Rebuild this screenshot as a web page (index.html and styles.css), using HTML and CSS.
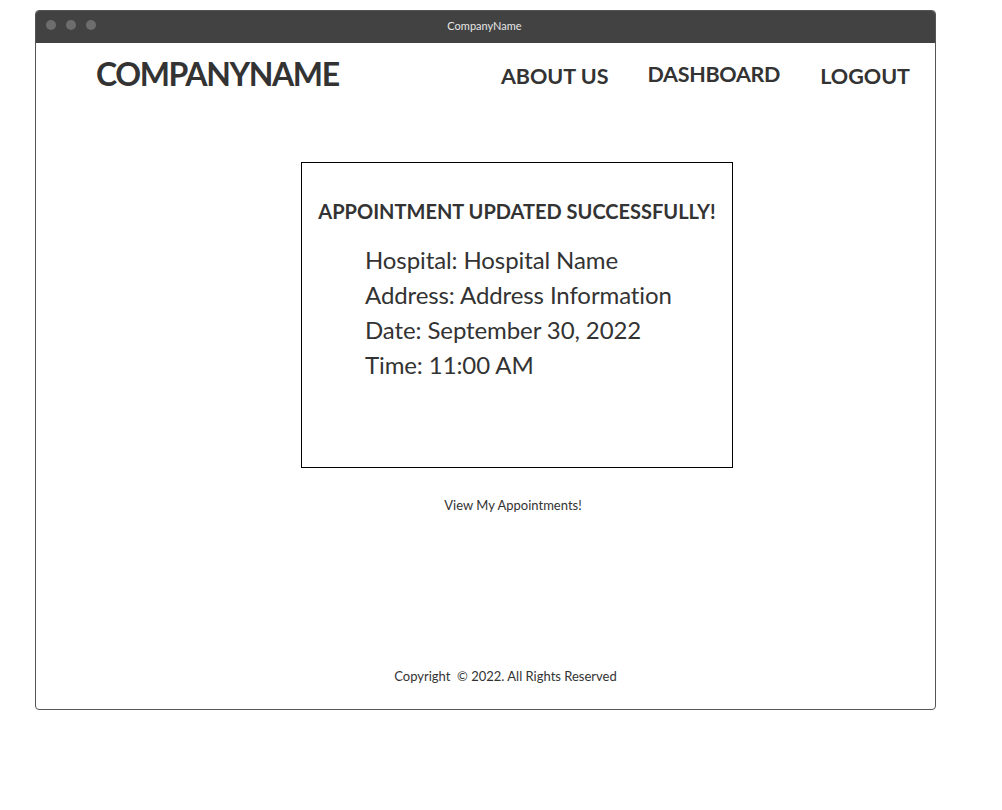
FILE: index.html
```html
<!DOCTYPE html>
<html lang="en">
<head>
  <meta charset="UTF-8">
  <meta name="viewport" content="width=device-width, initial-scale=1.0">
  <title>CompanyName</title>

  <link rel="stylesheet" href="styles.css">
</head>
<body>
  <div class="window">
    <div class="titlebar">
      <div class="dots">
        <span class="dot"></span>
        <span class="dot"></span>
        <span class="dot"></span>
      </div>
      <div class="title">CompanyName</div>
    </div>

    <div class="page">
      <header class="header">
        <div class="logo">COMPANYNAME</div>
        <nav class="nav">
          <a class="nav-about" href="#">ABOUT US</a>
          <a class="nav-dash" href="#">DASHBOARD</a>
          <a class="nav-logout" href="#">LOGOUT</a>
        </nav>
      </header>

      <main class="content">
        <div class="card">
          <h2>APPOINTMENT UPDATED SUCCESSFULLY!</h2>
          <ul class="details">
            <li>Hospital: Hospital Name</li>
            <li>Address: Address Information</li>
            <li>Date: September 30, 2022</li>
            <li>Time: 11:00 AM</li>
          </ul>
        </div>
        <a class="view-link" href="#">View My Appointments!</a>
      </main>

      <footer class="footer">Copyright &nbsp;© 2022. All Rights Reserved</footer>
    </div>
  </div>
</body>
</html>
```

FILE: styles.css
```css
body {
  font-family: Lato, "Liberation Sans", sans-serif;
  background-color: white;
  color: #333;
  margin: 0;
  padding: 0;
}

.window {
  width: 899px;
  height: 698px;
  margin: 10px 0 0 35px;
  border: 1px solid #555;
  border-radius: 4px;
  display: flex;
  flex-direction: column;
  overflow: hidden;
}

.titlebar {
  height: 32px;
  background-color: #424242;
  display: flex;
  align-items: center;
  position: relative;
}

.dots {
  display: flex;
  gap: 10px;
  padding-left: 10px;
  margin-top: -4px;
}

.dot {
  width: 10px;
  height: 10px;
  border-radius: 50%;
  background-color: #6d6d6d;
}

.title {
  position: absolute;
  left: 0;
  right: 0;
  top: 8px;
  text-align: center;
  color: #e6e6e6;
  font-size: 11px;
  padding-right: 2px;
}

.page {
  flex: 1;
  display: flex;
  flex-direction: column;
}

.header {
  display: flex;
  justify-content: space-between;
  padding: 10px 25px 0 60px;
}

.logo {
  font-size: 32px;
  font-weight: bold;
  letter-spacing: -1.4px;
  margin-top: 1px;
}

.nav {
  display: flex;
}

.nav a {
  color: #333;
  text-decoration: none;
  font-size: 21.5px;
  font-weight: bold;
}

.nav-about {
  margin-top: 10px;
  margin-right: 39px;
}

.nav-dash {
  margin-top: 8px;
  margin-right: 40px;
  letter-spacing: -0.3px;
}

.nav-logout {
  margin-top: 10px;
}

.content {
  display: flex;
  flex-direction: column;
  align-items: center;
  padding: 69px 0 0 63px;
}

.card {
  width: 430px;
  height: 304px;
  border: 1px solid #000;
  box-sizing: content-box;
}

.card h2 {
  font-size: 20px;
  text-align: center;
  margin: 36px 0 19px;
}

.details {
  list-style: none;
  margin: 0;
  padding-left: 63px;
  font-size: 24px;
  line-height: 35px;
  letter-spacing: -0.1px;
}

.view-link {
  margin-top: 29px;
  margin-left: -8px;
  font-size: 13px;
  color: #333;
  text-decoration: none;
}

.footer {
  margin-top: auto;
  padding: 0 0 25px 40px;
  text-align: center;
  font-size: 13px;
}
```
